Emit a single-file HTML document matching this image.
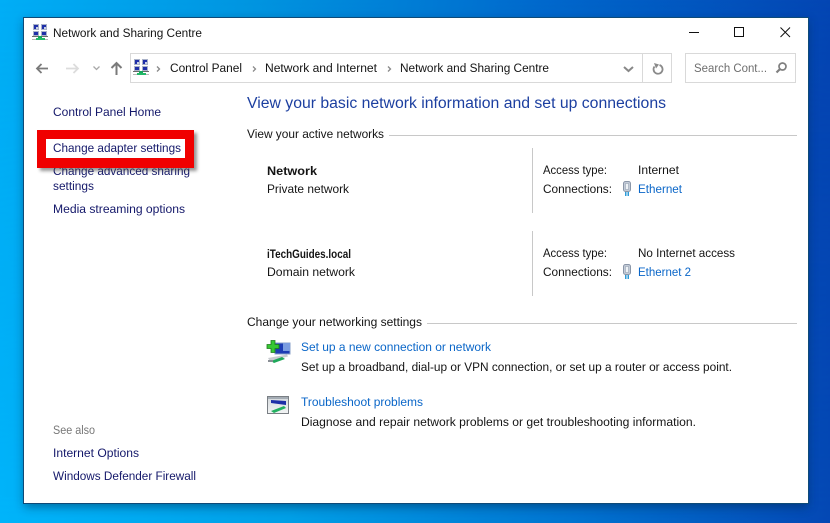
<!DOCTYPE html>
<html><head><meta charset="utf-8"><style>
html,body{margin:0;padding:0;width:830px;height:523px;overflow:hidden}
svg{display:block}
text{font-family:"Liberation Sans",sans-serif;font-size:12.2px;fill:#141414}
.n{fill:#14186a}.l{fill:#0a66c8}
</style></head><body>
<svg width="830" height="523" viewBox="0 0 830 523" xmlns="http://www.w3.org/2000/svg">
<defs>
<linearGradient id="bg" x1="0" y1="0" x2="1" y2="0.12">
<stop offset="0" stop-color="#00aef6"/><stop offset=".3" stop-color="#0095e0"/><stop offset=".65" stop-color="#0068cc"/><stop offset="1" stop-color="#0444b2"/>
</linearGradient>
<linearGradient id="bg2" x1="0" y1="0" x2="1" y2="0">
<stop offset="0" stop-color="#00b4fa"/><stop offset=".35" stop-color="#009fe6"/><stop offset=".7" stop-color="#0072cf"/><stop offset="1" stop-color="#0448b4"/>
</linearGradient>
<linearGradient id="bgm" x1="0" y1="0" x2="0" y2="1">
<stop offset="0" stop-color="#000" stop-opacity="1"/><stop offset="1" stop-color="#fff" stop-opacity="1"/>
</linearGradient>
<linearGradient id="ts" x1="0" y1="0" x2="0" y2="1">
<stop offset="0" stop-color="#d4d8dc"/><stop offset="1" stop-color="#f2f4f4"/>
</linearGradient>
<mask id="mk"><rect width="830" height="523" fill="url(#bgm)"/></mask>
<filter id="sh" x="-10%" y="-10%" width="120%" height="120%"><feGaussianBlur stdDeviation="5"/></filter>
<filter id="sr" x="-10%" y="-20%" width="120%" height="140%"><feGaussianBlur stdDeviation="1.5"/></filter>
<g id="net">
<rect x="1" y="0" width="6" height="6" fill="#aab2c8"/><rect x="2" y="1" width="4" height="4" fill="#1f2fa8"/><rect x="4" y="3" width="2" height="2" fill="#c8d0e8"/>
<rect x="9" y="0" width="6" height="6" fill="#aab2c8"/><rect x="10" y="1" width="4" height="4" fill="#1f2fa8"/><rect x="12" y="3" width="2" height="2" fill="#c8d0e8"/>
<rect x="1" y="7" width="6" height="5" fill="#aab2c8"/><rect x="2" y="8" width="4" height="3" fill="#1f2fa8"/>
<rect x="9" y="7" width="6" height="5" fill="#aab2c8"/><rect x="10" y="8" width="4" height="3" fill="#1f2fa8"/>
<rect x="0" y="12" width="16" height="1" fill="#6a6a6a"/>
<rect x="6" y="12" width="4" height="2" fill="#17a85a"/>
<rect x="4" y="14" width="9" height="2" fill="#22b868"/>
<rect x="0" y="15" width="4" height="1" fill="#b8b8b8"/><rect x="13" y="15" width="3" height="1" fill="#b8b8b8"/>
</g>
<g id="plug">
<rect x="1.5" y="0.500" width="7" height="10" rx="2" fill="#c4ccd8" stroke="#8a96a8"/>
<rect x="3.500" y="2.500" width="3" height="6" fill="#eef2f6" stroke="#98a4b4" stroke-width=".6"/>
<rect x="3" y="11" width="1.500" height="4" fill="#2e9bd8"/><rect x="5.500" y="11" width="1.500" height="4" fill="#2e9bd8"/>
</g>
</defs>
<rect width="830" height="523" fill="url(#bg)"/>
<rect width="830" height="523" fill="url(#bg2)" mask="url(#mk)"/>
<rect x="24" y="21" width="784" height="486" fill="#00264a" opacity=".5" filter="url(#sh)"/>
<rect x="23.500" y="17.500" width="785" height="486" fill="#fff" stroke="#0e4a78"/>

<!-- title -->
<use href="#net" x="32" y="24"/>
<text x="53" y="37" textLength="149" lengthAdjust="spacingAndGlyphs">Network and Sharing Centre</text>
<path d="M689 32.500H699" stroke="#111" fill="none"/>
<rect x="734.500" y="27.500" width="9" height="9" fill="none" stroke="#111"/>
<path d="M780.500 27.500L790 37M790 27.500L780.500 37" stroke="#111" fill="none"/>

<!-- nav -->
<path d="M37 68.500H48M41.500 64L37 68.500L41.500 73" stroke="#7a7a7a" stroke-width="1.800" fill="none"/>
<path d="M66 68.500H78M73.500 64L78 68.500L73.500 73" stroke="#dcdcdc" stroke-width="1.800" fill="none"/>
<path d="M93.500 66.500L96.500 69.500L99.500 66.500" stroke="#a8a8a8" stroke-width="1.300" fill="none"/>
<path d="M116.500 75V63M111.500 68L116.500 63L121.500 68" stroke="#7a7a7a" stroke-width="2" fill="none"/>
<rect x="130.500" y="53.500" width="541" height="29" fill="#fff" stroke="#d9d9d9"/>
<rect x="642" y="54" width="1" height="28" fill="#d9d9d9"/>
<use href="#net" x="133" y="59"/>
<path d="M157 66.500L159.500 69L157 71.500" stroke="#888" stroke-width="1.300" fill="none"/>
<text x="170" y="72" textLength="72" lengthAdjust="spacingAndGlyphs">Control Panel</text>
<path d="M253 66.500L255.500 69L253 71.500" stroke="#888" stroke-width="1.300" fill="none"/>
<text x="265" y="72" textLength="112" lengthAdjust="spacingAndGlyphs">Network and Internet</text>
<path d="M388 66.500L390.500 69L388 71.500" stroke="#888" stroke-width="1.300" fill="none"/>
<text x="400" y="72" textLength="149" lengthAdjust="spacingAndGlyphs">Network and Sharing Centre</text>
<path d="M624 67L628.500 71L633 67" stroke="#888" stroke-width="2" fill="none"/>
<path d="M654.500 66.500A4.500 4.500 0 1 0 659.500 65" stroke="#8a8a8a" stroke-width="1.800" fill="none"/>
<path d="M654 63L659 64.500L656 68.500Z" fill="#8a8a8a"/>
<rect x="685.500" y="53.500" width="110" height="29" fill="#fff" stroke="#d9d9d9"/>
<text x="694" y="72" textLength="73" lengthAdjust="spacingAndGlyphs" style="fill:#6e6e6e">Search Cont...</text>
<circle cx="782.500" cy="66.500" r="3.500" fill="none" stroke="#808080" stroke-width="1.700"/>
<path d="M780 69L776.500 72.500" stroke="#808080" stroke-width="2.200" fill="none"/>

<!-- left -->
<text class="n" x="53" y="116" textLength="108" lengthAdjust="spacingAndGlyphs">Control Panel Home</text>
<text class="n" x="53" y="175" textLength="137" lengthAdjust="spacingAndGlyphs">Change advanced sharing</text>
<text class="n" x="53" y="190" textLength="41" lengthAdjust="spacingAndGlyphs">settings</text>
<text class="n" x="53" y="213" textLength="132" lengthAdjust="spacingAndGlyphs">Media streaming options</text>
<rect x="40" y="133" width="157" height="38" fill="#444" opacity=".55" filter="url(#sr)"/>
<rect x="37" y="130" width="157" height="38" fill="#f00000"/>
<rect x="46" y="139" width="139" height="19" fill="#fff"/>
<text class="n" x="53" y="152" textLength="128" lengthAdjust="spacingAndGlyphs">Change adapter settings</text>
<text x="53" y="434" textLength="42" lengthAdjust="spacingAndGlyphs" style="fill:#777">See also</text>
<text class="n" x="53" y="457" textLength="86" lengthAdjust="spacingAndGlyphs">Internet Options</text>
<text class="n" x="53" y="480" textLength="143" lengthAdjust="spacingAndGlyphs">Windows Defender Firewall</text>

<!-- main -->
<text x="247" y="108" textLength="419" lengthAdjust="spacingAndGlyphs" style="font-size:15.5px;fill:#1c3fa0">View your basic network information and set up connections</text>
<text x="247" y="138" textLength="137" lengthAdjust="spacingAndGlyphs">View your active networks</text>
<rect x="389" y="135" width="408" height="1" fill="#c8c8c8"/>

<text x="267" y="175" textLength="50" lengthAdjust="spacingAndGlyphs" style="font-weight:bold">Network</text>
<text x="267" y="193" textLength="82" lengthAdjust="spacingAndGlyphs">Private network</text>
<rect x="532" y="148" width="1" height="65" fill="#c8c8c8"/>
<text x="543" y="174" textLength="64" lengthAdjust="spacingAndGlyphs">Access type:</text>
<text x="638" y="174" textLength="41" lengthAdjust="spacingAndGlyphs">Internet</text>
<text x="543" y="193" textLength="69" lengthAdjust="spacingAndGlyphs">Connections:</text>
<use href="#plug" x="622" y="181"/>
<text class="l" x="638" y="193" textLength="44" lengthAdjust="spacingAndGlyphs">Ethernet</text>

<text x="267" y="258" textLength="84" lengthAdjust="spacingAndGlyphs" style="font-weight:bold;font-size:11.8px">iTechGuides.local</text>
<text x="267" y="276" textLength="88" lengthAdjust="spacingAndGlyphs">Domain network</text>
<rect x="532" y="231" width="1" height="65" fill="#c8c8c8"/>
<text x="543" y="257" textLength="64" lengthAdjust="spacingAndGlyphs">Access type:</text>
<text x="638" y="257" textLength="97" lengthAdjust="spacingAndGlyphs">No Internet access</text>
<text x="543" y="276" textLength="69" lengthAdjust="spacingAndGlyphs">Connections:</text>
<use href="#plug" x="622" y="264"/>
<text class="l" x="638" y="276" textLength="53" lengthAdjust="spacingAndGlyphs">Ethernet 2</text>

<text x="247" y="326" textLength="175" lengthAdjust="spacingAndGlyphs">Change your networking settings</text>
<rect x="427" y="323" width="370" height="1" fill="#c8c8c8"/>

<!-- setup icon -->
<rect x="275" y="343" width="15" height="11" fill="#1c3cb4" stroke="#8aa0c8"/>
<rect x="283" y="343" width="7" height="8" fill="#7a9ce0"/>
<path d="M267 344.500H271V340.500H275V344.500H279V348.500H275V352.500H271V348.500H267Z" fill="#36c832" stroke="#1c7a1c" stroke-width=".8"/>
<path d="M268 358L287 354.500L288 356.500L270 361Z" fill="#c8ccd0"/>
<path d="M271 361L282 357L285 359L274 363Z" fill="#1fa85a"/>
<rect x="268" y="360" width="5" height="2" fill="#8a8f96"/>
<text class="l" x="301" y="351" textLength="190" lengthAdjust="spacingAndGlyphs">Set up a new connection or network</text>
<text x="301" y="371" textLength="431" lengthAdjust="spacingAndGlyphs">Set up a broadband, dial-up or VPN connection, or set up a router or access point.</text>

<!-- troubleshoot icon -->
<rect x="267.500" y="396.500" width="21" height="17" fill="url(#ts)" stroke="#7a7f84"/>
<rect x="268" y="397" width="20" height="2" fill="#a4acb4"/>
<path d="M271 400L286 401V405L271 403Z" fill="#1d2fa8"/>
<path d="M271 411L284 406L286 408L274 413Z" fill="#23b060"/>
<text class="l" x="301" y="406" textLength="122" lengthAdjust="spacingAndGlyphs">Troubleshoot problems</text>
<text x="301" y="426" textLength="395" lengthAdjust="spacingAndGlyphs">Diagnose and repair network problems or get troubleshooting information.</text>
</svg>
</body></html>
